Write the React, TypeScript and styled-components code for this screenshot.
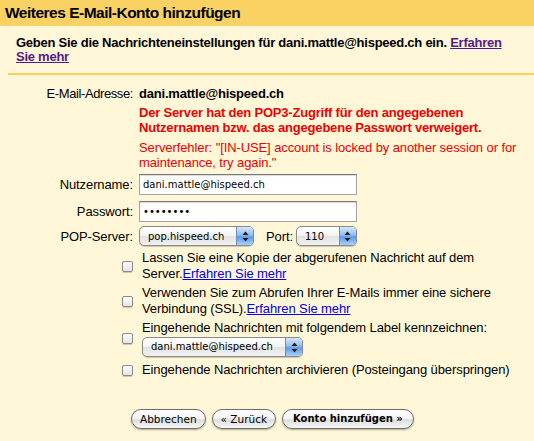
import React from "react";
import styled, { createGlobalStyle } from "styled-components";

const GlobalStyle = createGlobalStyle`
  html, body { margin: 0; padding: 0; }
  body {
    background: #fff7d7;
    font-family: "Liberation Sans", Arial, Helvetica, sans-serif;
    font-size: 13px;
    color: #000;
  }
`;

const Page = styled.div`
  width: 534px;
  min-height: 441px;
  background: #fff7d7;
`;

const Header = styled.div`
  height: 26px;
  background: #fad163;
  display: flex;
  align-items: center;
  padding-left: 5px;
  font-size: 15.5px;
  font-weight: bold;
  letter-spacing: -0.5px;
`;

const Intro = styled.p`
  margin: 0;
  padding: 10px 16px 0 16px;
  font-weight: bold;
  line-height: 14px;
  letter-spacing: -0.25px;
`;

const VisitedLink = styled.a`
  color: #551a8b;
  text-decoration: underline;
`;

const BlueLink = styled.a`
  color: #0000ee;
  text-decoration: underline;
`;

const Divider = styled.div`
  margin: 9px 0 0 8px;
  height: 2px;
  background: #f9cf5f;
`;

const Form = styled.div`
  display: flex;
  flex-direction: column;
`;

const Row = styled.div<{ $top: number; $lh?: number }>`
  display: grid;
  grid-template-columns: 133px 1fr;
  column-gap: 6px;
  align-items: center;
  margin-top: ${(p) => p.$top}px;
  line-height: ${(p) => p.$lh ?? 15}px;
  letter-spacing: -0.1px;
`;

const Label = styled.div<{ $tight?: boolean }>`
  text-align: right;
  white-space: nowrap;
  letter-spacing: ${(p) => (p.$tight ? "-0.4px" : "-0.1px")};
`;

const CheckCell = styled.div`
  display: flex;
  justify-content: flex-end;
`;

const Value = styled.div<{ $bold?: boolean; $error?: boolean }>`
  font-weight: ${(p) => (p.$bold ? "bold" : "normal")};
  color: ${(p) => (p.$error ? "#ee0000" : "#000")};
  padding-right: 14px;
  letter-spacing: ${(p) => (p.$bold ? "-0.2px" : "-0.1px")};
`;

const TextInput = styled.input`
  box-sizing: border-box;
  width: 218px;
  height: 21px;
  margin: 0;
  padding: 0 3px;
  border: 1px solid #a3a3a3;
  border-top-color: #777;
  box-shadow: inset 0 1px 1px rgba(0, 0, 0, 0.15);
  background: #fff;
  font-family: "DejaVu Sans", Verdana, sans-serif;
  font-size: 10px;
  color: #000;
  outline: none;
  display: block;
`;

const ControlLine = styled.div`
  display: flex;
  align-items: center;
`;

const PortLabel = styled.span`
  margin: 0 3px 0 12px;
`;

const SelectBox = styled.div<{ $w: number }>`
  box-sizing: border-box;
  width: ${(p) => p.$w}px;
  height: 20px;
  border: 1px solid #8a8a8a;
  border-radius: 5px;
  overflow: hidden;
  display: flex;
  align-items: stretch;
  background: linear-gradient(#ffffff 0%, #f3f3f3 48%, #e2e2e2 52%, #f2f2f2 100%);
  box-shadow: 0 1px 1px rgba(0, 0, 0, 0.2);
  font-family: "DejaVu Sans", Verdana, sans-serif;
  font-size: 10px;
  letter-spacing: 0;
`;

const SelectText = styled.span`
  flex: 1;
  display: flex;
  align-items: center;
  padding-left: 8px;
  white-space: nowrap;
  overflow: hidden;
`;

const Stepper = styled.span`
  width: 16px;
  border-left: 1px solid #6d8fb8;
  background: linear-gradient(#d6e7fa 0%, #8fbdf0 45%, #5d9be6 55%, #a8d0fa 100%);
  display: flex;
  align-items: center;
  justify-content: center;
`;

const CheckBox = styled.span`
  box-sizing: border-box;
  width: 11px;
  height: 11px;
  border: 1px solid #8a8a8a;
  border-radius: 2px;
  background: linear-gradient(#ffffff, #e4e4e4);
  box-shadow: 0 1px 1px rgba(0, 0, 0, 0.2);
  display: block;
`;

const CheckText = styled.div`
  padding-left: 3px;
  padding-right: 14px;
`;

const LabelSelectWrap = styled.div`
  margin-top: 1px;
`;

const ButtonRow = styled.div`
  display: flex;
  gap: 6px;
  padding-left: 131px;
  margin-top: 31px;
`;

const Button = styled.button<{ $primary?: boolean }>`
  box-sizing: border-box;
  height: 20px;
  margin: 0;
  padding: 0 ${(p) => (p.$primary ? 10 : 8)}px;
  border: 1px solid #6e6e6e;
  border-radius: 10px;
  background: linear-gradient(#ffffff 0%, #f5f5f5 45%, #dddddd 55%, #f7f7f7 100%);
  box-shadow: 0 1px 2px rgba(0, 0, 0, 0.35);
  font-family: "DejaVu Sans", Verdana, sans-serif;
  font-size: ${(p) => (p.$primary ? "10px" : "10.5px")};
  font-weight: ${(p) => (p.$primary ? "bold" : "normal")};
  color: #000;
  line-height: 18px;
  cursor: pointer;
`;

const Arrows = () => (
  <svg width="7" height="11" viewBox="0 0 7 11">
    <polygon points="3.5,0.5 6.5,4 0.5,4" fill="#1a1a1a" />
    <polygon points="0.5,7 6.5,7 3.5,10.5" fill="#1a1a1a" />
  </svg>
);

const Select = ({ w, text }: { w: number; text: string }) => (
  <SelectBox $w={w}>
    <SelectText>{text}</SelectText>
    <Stepper>
      <Arrows />
    </Stepper>
  </SelectBox>
);

export default function App() {
  return (
    <Page>
      <GlobalStyle />
      <Header>Weiteres E-Mail-Konto hinzufügen</Header>
      <Intro>
        Geben Sie die Nachrichteneinstellungen für dani.mattle@hispeed.ch ein.{" "}
        <VisitedLink href="#">Erfahren Sie mehr</VisitedLink>
      </Intro>
      <Divider />
      <Form>
        <Row $top={11}>
          <Label $tight>E-Mail-Adresse:</Label>
          <Value $bold>dani.mattle@hispeed.ch</Value>
        </Row>
        <Row $top={4}>
          <div />
          <Value $bold $error>
            Der Server hat den POP3-Zugriff für den angegebenen Nutzernamen bzw. das angegebene
            Passwort verweigert.
          </Value>
        </Row>
        <Row $top={5}>
          <div />
          <Value $error>
            Serverfehler: "[IN-USE] account is locked by another session or for maintenance, try
            again."
          </Value>
        </Row>
        <Row $top={4}>
          <Label>Nutzername:</Label>
          <div>
            <TextInput type="text" defaultValue="dani.mattle@hispeed.ch" />
          </div>
        </Row>
        <Row $top={6}>
          <Label>Passwort:</Label>
          <div>
            <TextInput type="password" defaultValue="xxxxxxxx" />
          </div>
        </Row>
        <Row $top={4}>
          <Label>POP-Server:</Label>
          <ControlLine>
            <Select w={115} text="pop.hispeed.ch" />
            <PortLabel>Port:</PortLabel>
            <Select w={61} text="110" />
          </ControlLine>
        </Row>
        <Row $top={4} $lh={16}>
          <CheckCell>
            <CheckBox />
          </CheckCell>
          <CheckText>
            Lassen Sie eine Kopie der abgerufenen Nachricht auf dem Server.
            <BlueLink href="#">Erfahren Sie mehr</BlueLink>
          </CheckText>
        </Row>
        <Row $top={3} $lh={16}>
          <CheckCell>
            <CheckBox />
          </CheckCell>
          <CheckText>
            Verwenden Sie zum Abrufen Ihrer E-Mails immer eine sichere Verbindung (SSL).
            <BlueLink href="#">Erfahren Sie mehr</BlueLink>
          </CheckText>
        </Row>
        <Row $top={3} $lh={16}>
          <CheckCell>
            <CheckBox />
          </CheckCell>
          <CheckText>
            Eingehende Nachrichten mit folgendem Label kennzeichnen:
            <LabelSelectWrap>
              <Select w={161} text="dani.mattle@hispeed.ch" />
            </LabelSelectWrap>
          </CheckText>
        </Row>
        <Row $top={5} $lh={16}>
          <CheckCell>
            <CheckBox />
          </CheckCell>
          <CheckText>Eingehende Nachrichten archivieren (Posteingang überspringen)</CheckText>
        </Row>
      </Form>
      <ButtonRow>
        <Button>Abbrechen</Button>
        <Button>« Zurück</Button>
        <Button $primary>Konto hinzufügen »</Button>
      </ButtonRow>
    </Page>
  );
}
